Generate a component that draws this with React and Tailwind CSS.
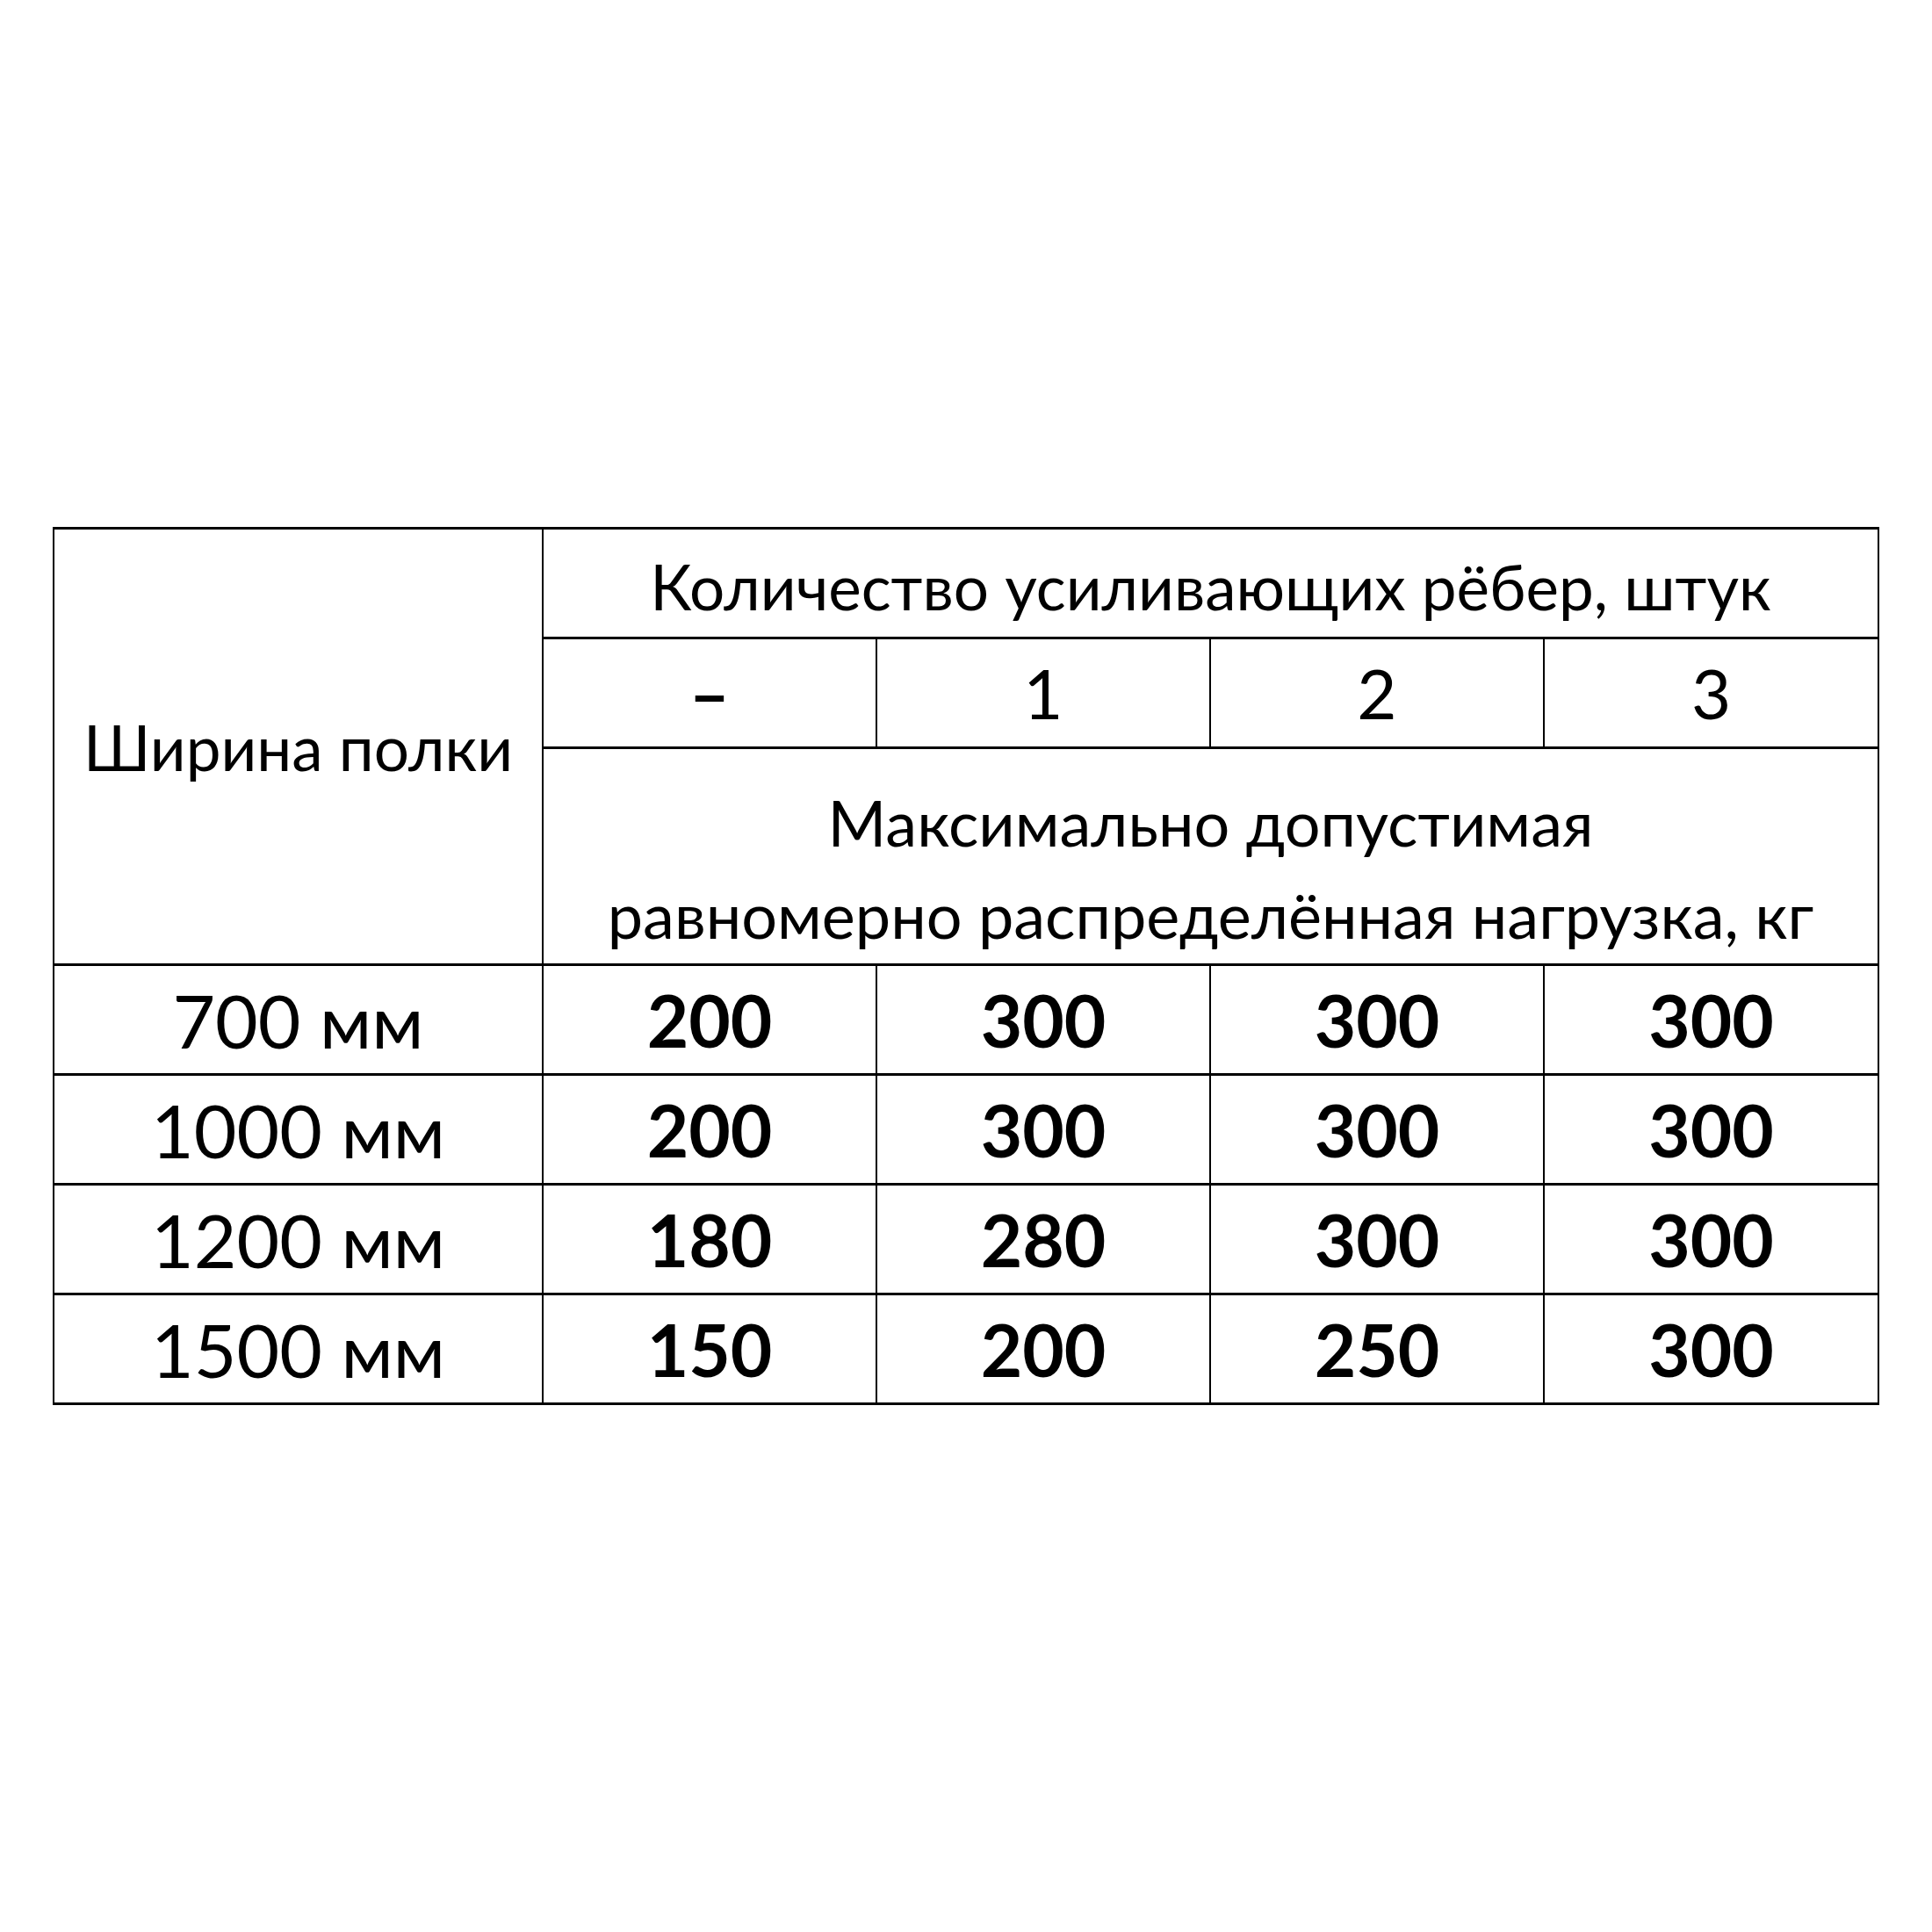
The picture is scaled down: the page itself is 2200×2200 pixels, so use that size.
import React from "react";

const rows = [
  ["700 мм", "200", "300", "300", "300"],
  ["1000 мм", "200", "300", "300", "300"],
  ["1200 мм", "180", "280", "300", "300"],
  ["1500 мм", "150", "200", "250", "300"],
];

export default function App() {
  const cell = "border-x-2 border-y-[3px] border-black text-center align-middle p-0 whitespace-nowrap";
  return (
    <div className="w-[2200px] h-[2200px] bg-white flex items-center justify-center font-['Lato',sans-serif] text-black">
      <table className="border-collapse table-fixed w-[2078px]">
        <colgroup>
          <col className="w-[557px]" />
          <col className="w-[380px]" />
          <col className="w-[380px]" />
          <col className="w-[380px]" />
          <col className="w-[381px]" />
        </colgroup>
        <tbody>
          <tr className="h-[125px]">
            <td rowSpan={3} className={`${cell} text-[71px] leading-[105px]`}>
              Ширина полки
            </td>
            <td colSpan={4} className={`${cell} text-[71px] leading-[105px] pt-[6px]`}>
              Количество усиливающих рёбер, штук
            </td>
          </tr>
          <tr className="h-[125px]">
            <td className={`${cell} text-[80px] leading-[105px] font-bold`}>–</td>
            <td className={`${cell} text-[78px] leading-[105px]`}>1</td>
            <td className={`${cell} text-[78px] leading-[105px]`}>2</td>
            <td className={`${cell} text-[78px] leading-[105px]`}>3</td>
          </tr>
          <tr className="h-[247px]">
            <td colSpan={4} className={`${cell} text-[72px] leading-[105px] pt-[28px]`}>
              Максимально допустимая
              <br />
              равномерно распределённая нагрузка, кг
            </td>
          </tr>
          {rows.map((r, i) => (
            <tr key={i} className="h-[125px]">
              <td className={`${cell} text-[84px] leading-[105px]`}>{r[0]}</td>
              {r.slice(1).map((v, j) => (
                <td key={j} className={`${cell} text-[82px] leading-[105px] font-bold`}>
                  {v}
                </td>
              ))}
            </tr>
          ))}
        </tbody>
      </table>
    </div>
  );
}
